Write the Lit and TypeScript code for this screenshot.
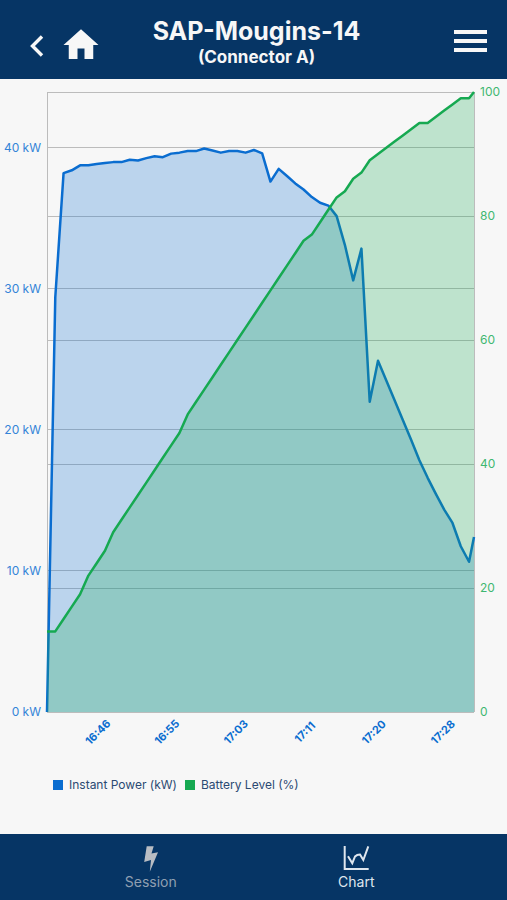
import { LitElement, html, svg, css } from "lit";
import { customElement } from "lit/decorators.js";

/** Battery level in percent, one sample per interval. */
const BATTERY = [
  13, 13, 15, 17, 19, 22, 24, 26, 29, 31, 33, 35, 37, 39, 41, 43, 45, 48, 50, 52, 54, 56, 58, 60, 62, 64, 66,
  68, 70, 72, 74, 76, 77, 79, 81, 83, 84, 86, 87, 89, 90, 91, 92, 93, 94, 95, 95, 96, 97, 98, 99, 99, 100,
];

/** Instant power in kW, one sample per interval. */
const POWER = [
  0, 29.4, 38.2, 38.4, 38.75, 38.75, 38.85, 38.92, 38.98, 38.98, 39.15, 39.1, 39.26, 39.4, 39.33, 39.58, 39.65,
  39.76, 39.76, 39.94, 39.8, 39.65, 39.76, 39.76, 39.65, 39.84, 39.6, 37.6, 38.5, 38, 37.47, 37.04, 36.5, 36.1,
  35.9, 35.15, 33.1, 30.6, 32.85, 22, 24.9, 23.5, 22.1, 20.7, 19.3, 17.85, 16.6, 15.45, 14.35, 13.4, 11.75,
  10.65, 12.4,
];

const SPAN = 51.6; // the last sample closes the session before a full interval
const POWER_MAX = 43.95;
const POWER_TICKS = [0, 10, 20, 30, 40];
const BATTERY_TICKS = [0, 20, 40, 60, 80, 100];
const TIMES = ["16:46", "16:55", "17:03", "17:11", "17:20", "17:28"];

const fromTop = (value: number, max: number) => `${(100 - (value / max) * 100).toFixed(3)}%`;

function trace(values: number[], max: number): string {
  return values
    .map((v, i) => {
      const x = (Math.min(i, SPAN) / SPAN) * 1000;
      const y = 1000 - (v / max) * 1000;
      return `${x.toFixed(1)},${y.toFixed(1)}`;
    })
    .join(" L");
}

@customElement("session-chart")
export class SessionChart extends LitElement {
  static styles = css`
    :host {
      display: grid;
      grid-template-columns: 47px minmax(0, 1fr) 33px;
      grid-template-rows: minmax(300px, 1fr) 53px auto;
      --power: #0a6dd0;
      --battery: #16a951;
    }
    svg {
      display: block;
      width: 100%;
      height: 100%;
      overflow: visible;
    }
    text {
      font-size: 12px;
    }
    .power-axis text {
      fill: #3484d8;
      text-anchor: end;
    }
    .battery-axis text {
      fill: #3fb771;
    }
    .times {
      grid-column: 2;
    }
    .times text {
      fill: var(--power);
      font-size: 11px;
      font-weight: 700;
      text-anchor: middle;
      transform-box: fill-box;
      transform-origin: center;
      transform: rotate(-45deg);
    }
    .grid {
      stroke: #bcbcbc;
      stroke-width: 1;
      shape-rendering: crispEdges;
    }
    .line {
      fill: none;
      stroke-width: 2.5;
      stroke-linejoin: round;
      vector-effect: non-scaling-stroke;
    }
    .area {
      fill-opacity: 0.255;
    }
    .power.line {
      stroke: var(--power);
    }
    .power.area {
      fill: var(--power);
    }
    .battery.line {
      stroke: var(--battery);
    }
    .battery.area {
      fill: var(--battery);
    }
    .legend {
      grid-column: 1 / -1;
      display: flex;
      flex-wrap: wrap;
      gap: 8px;
      margin: 0;
      padding: 12px 53px 41px;
      list-style: none;
      font-size: 12px;
      line-height: 16px;
      color: #2b4a73;
    }
    .legend li {
      display: flex;
      align-items: center;
      gap: 6px;
    }
    .swatch {
      width: 10px;
      height: 10px;
    }
    .swatch.power {
      background: var(--power);
    }
    .swatch.battery {
      background: var(--battery);
    }
  `;

  private series(name: string, values: number[], max: number) {
    const d = trace(values, max);
    return svg`
      <path class="${name} area" d="M${d} L1000,1000 L0,1000 Z"></path>
      <path class="${name} line" d="M${d}"></path>`;
  }

  render() {
    return html`
      <svg class="power-axis" aria-hidden="true">
        ${POWER_TICKS.map((t) => svg`<text x="41" y=${fromTop(t, POWER_MAX)} dy="4">${t} kW</text>`)}
      </svg>
      <svg role="img" aria-label="Instant power and battery level over time">
        <g class="grid">
          ${POWER_TICKS.map((t) => {
            const y = fromTop(t, POWER_MAX);
            return svg`<line x1="0" x2="100%" y1=${y} y2=${y}></line>`;
          })}
          ${BATTERY_TICKS.map((t) => {
            const y = fromTop(t, 100);
            return svg`<line x1="0" x2="100%" y1=${y} y2=${y}></line>`;
          })}
          <line x1="0" x2="0" y1="0" y2="100%"></line>
          <line x1="100%" x2="100%" y1="0" y2="100%"></line>
        </g>
        <svg viewBox="0 0 1000 1000" preserveAspectRatio="none" width="100%" height="100%">
          ${this.series("power", POWER, POWER_MAX)} ${this.series("battery", BATTERY, 100)}
        </svg>
      </svg>
      <svg class="battery-axis" aria-hidden="true">
        ${BATTERY_TICKS.map((t) => svg`<text x="6" y=${fromTop(t, 100)} dy="4">${t}</text>`)}
      </svg>
      <svg class="times" aria-hidden="true">
        ${TIMES.map((t, i) => svg`<text x="${(11.9 + i * 16.16).toFixed(2)}%" y="24">${t}</text>`)}
      </svg>
      <ul class="legend">
        <li><span class="swatch power"></span>Instant Power (kW)</li>
        <li><span class="swatch battery"></span>Battery Level (%)</li>
      </ul>
    `;
  }
}

@customElement("app-root")
export class AppRoot extends LitElement {
  static styles = css`
    :host {
      display: flex;
      flex-direction: column;
      min-height: 100vh;
      background: #f7f7f7;
      font-family: Inter, "Liberation Sans", sans-serif;
    }
    button {
      padding: 0;
      border: 0;
      background: none;
      color: inherit;
      font: inherit;
      cursor: pointer;
    }
    svg {
      display: block;
    }
    .header {
      display: grid;
      grid-template-columns: 104px 1fr 104px;
      align-items: start;
      box-sizing: border-box;
      min-height: 79px;
      padding-top: 16px;
      background: #063565;
      color: #f7f7f7;
    }
    .left {
      display: flex;
      align-items: center;
      gap: 14px;
      padding: 8px 0 0 28px;
    }
    .right {
      display: flex;
      justify-content: flex-end;
      padding: 14px 20px 0 0;
    }
    .titles {
      padding-left: 6px;
      text-align: center;
    }
    .title {
      margin: 0;
      font-size: 25px;
      line-height: 30px;
      font-weight: 700;
      white-space: nowrap;
    }
    .subtitle {
      margin: 0;
      font-size: 17px;
      line-height: 22px;
      font-weight: 700;
    }
    .chart {
      flex: 1;
      padding-top: 13px;
    }
    .tabs {
      display: flex;
      box-sizing: border-box;
      min-height: 66px;
      padding: 0 48px;
      background: #063565;
      color: #dfe6ee;
    }
    .tab {
      flex: 1;
      display: flex;
      flex-direction: column;
      align-items: center;
      padding: 10px 0 8px;
      font-size: 14px;
      line-height: 20px;
    }
    .tab.idle {
      color: #8f9fb1;
    }
  `;

  render() {
    return html`
      <header class="header">
        <div class="left">
          <button aria-label="Back">
            <svg width="18" height="24" viewBox="0 0 18 24">
              <path d="M14 3.5 4.5 13 14 22.5" fill="none" stroke="#f7f7f7" stroke-width="3.4" />
            </svg>
          </button>
          <button aria-label="Home">
            <svg width="42" height="42" viewBox="0 0 24 24">
              <path d="M10 20v-6h4v6h5v-8h3L12 3 2 12h3v8z" fill="#f7f7f7" />
            </svg>
          </button>
        </div>
        <div class="titles">
          <h1 class="title">SAP-Mougins-14</h1>
          <p class="subtitle">(Connector A)</p>
        </div>
        <div class="right">
          <button aria-label="Menu">
            <svg width="33" height="22" viewBox="0 0 33 22">
              <path d="M0 2h33M0 11h33M0 20h33" stroke="#f7f7f7" stroke-width="4" />
            </svg>
          </button>
        </div>
      </header>
      <session-chart class="chart"></session-chart>
      <nav class="tabs">
        <button class="tab idle">
          <svg width="28" height="28" viewBox="0 0 28 28">
            <path d="M9.700 2.300h7l-2.200 7.200 6.500-1.300L12.800 27.800l1.200-11.800-6.800 2z" fill="#b9bdc3" />
          </svg>
          Session
        </button>
        <button class="tab" aria-current="page">
          <svg width="28" height="28" viewBox="0 0 28 28" fill="none" stroke="#dfe6ee" stroke-width="2">
            <path d="M2.700 2v23h24" />
            <path d="M6 12.200l4.300 7 2.700-6.700c1.500-1.500 3.500-2 5-2l3.300 5.500L26.300 2.300" />
          </svg>
          Chart
        </button>
      </nav>
    `;
  }
}
